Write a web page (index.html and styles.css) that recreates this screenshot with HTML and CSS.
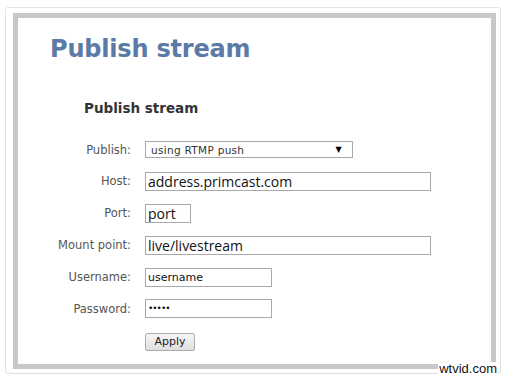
FILE: index.html
```
<!DOCTYPE html>
<html>
<head>
<title>Publish stream</title>
<link rel="stylesheet" href="styles.css">
</head>
<body>
<div class="shot">
  <div class="panel">
    <h1 class="title">Publish stream</h1>
    <h2 class="subtitle">Publish stream</h2>
    <div class="form">
      <label class="lbl">Publish:</label>
      <div class="select"><span>using RTMP push</span><span class="arrow">&#9660;</span></div>

      <label class="lbl">Host:</label>
      <div class="field wide big">address.primcast.com</div>

      <label class="lbl">Port:</label>
      <div class="field port big">port</div>

      <label class="lbl">Mount point:</label>
      <div class="field wide big">live/livestream</div>

      <label class="lbl">Username:</label>
      <div class="field mid">username</div>

      <label class="lbl">Password:</label>
      <div class="field mid pass">&#8226;&#8226;&#8226;&#8226;&#8226;</div>

      <span></span>
      <div><span class="button">Apply</span></div>
    </div>
  </div>
  <span class="mark">wtvid.com</span>
</div>
</body>
</html>
```

FILE: styles.css
```
/* Publish stream settings page */

body
{ margin: 0;
background: #ffffff;
font-family: "DejaVu Sans", Verdana, sans-serif;
}

div.shot
{ position: relative;
margin: 7px 0 0 5px;
width: 483px;
height: 360px;
border: 1px solid #e2e2e2;
border-radius: 3px;
padding: 5px 4px 0 7px;
box-sizing: content-box;
}

div.panel
{ box-sizing: border-box;
width: 483px;
height: 356px;
border: 5px solid #c8c8c8;
background: #ffffff;
}

h1.title
{ margin: 16px 0 0 32px;
font-size: 24px;
line-height: 30px;
letter-spacing: -0.2px;
font-weight: bold;
color: #5b7aa5;
}

h2.subtitle
{ margin: 36px 0 0 66px;
font-size: 13.5px;
line-height: 16px;
font-weight: bold;
color: #333333;
}

div.form
{ display: grid;
grid-template-columns: 113px auto;
grid-auto-rows: 18px;
column-gap: 14px;
row-gap: 13.9px;
margin-top: 24.5px;
align-items: center;
justify-items: start;
}

label.lbl
{ justify-self: end;
font-size: 11.5px;
color: #555555;
}

div.select
{ box-sizing: border-box;
display: flex;
justify-content: space-between;
align-items: center;
width: 208px;
height: 17px;
padding: 0 10px 0 5px;
border: 1px solid #a9a9a9;
font-size: 10.5px;
color: #333333;
letter-spacing: 0.3px;
}

span.arrow
{ font-size: 8px;
color: #000000;
}

div.field
{ box-sizing: border-box;
height: 19px;
padding: 0 2px;
border: 1px solid #a9a9a9;
color: #111111;
line-height: 17px;
overflow: hidden;
}

div.wide { width: 286px; }
div.port { width: 46px; }
div.mid { width: 127px; font-size: 11px; }
div.big { font-size: 14px; font-family: "Open Sans", "DejaVu Sans", sans-serif; }
div.pass { font-size: 9px; letter-spacing: -1px; }

span.button
{ display: inline-block;
box-sizing: border-box;
width: 50px;
height: 18px;
border: 1px solid #acacac;
border-radius: 2px;
background: linear-gradient(#f6f6f6, #dedede);
text-align: center;
font-size: 11px;
line-height: 16px;
color: #222222;
}

span.mark
{ position: absolute;
right: 2px;
bottom: -3px;
background: #ffffff;
padding: 0 1px;
font-family: "Liberation Sans", Arial, sans-serif;
font-size: 13px;
line-height: 14px;
color: #111111;
}
```
